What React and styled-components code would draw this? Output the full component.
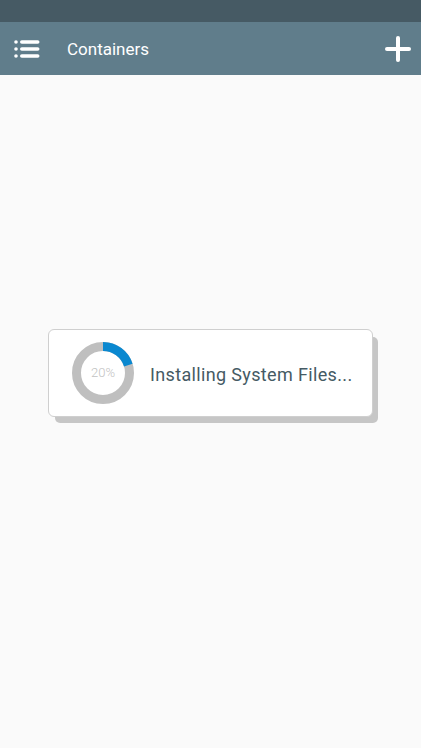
import React from 'react';
import styled, { createGlobalStyle } from 'styled-components';

const GlobalStyle = createGlobalStyle`
  html, body {
    margin: 0;
    padding: 0;
    background: #fafafa;
    font-family: Roboto, "Liberation Sans", sans-serif;
  }
`;

const Screen = styled.div`
  width: 421px;
  height: 748px;
  display: flex;
  flex-direction: column;
  background: #fafafa;
  overflow: hidden;
`;

const StatusBar = styled.div`
  height: 22px;
  background: #465a64;
  flex-shrink: 0;
`;

const Toolbar = styled.div`
  height: 53px;
  background: #607d8b;
  display: flex;
  align-items: center;
  padding: 0 10px 0 14px;
  flex-shrink: 0;
`;

const Title = styled.div`
  flex: 1;
  margin-left: 27px;
  color: #fff;
  font-size: 17px;
  padding-top: 1px;
`;

const IconButton = styled.div`
  display: flex;
  align-items: center;
  justify-content: center;
`;

const Body = styled.div`
  flex: 1;
  display: flex;
  align-items: center;
  justify-content: center;
  padding-bottom: 78px;
`;

const Dialog = styled.div`
  box-sizing: border-box;
  width: 325px;
  height: 88px;
  background: #fff;
  border: 1px solid #cfcfcf;
  border-radius: 6px;
  box-shadow: 6px 7px 0 -1px #c6c6c6;
  display: flex;
  align-items: center;
  padding: 0 0 0 23px;
`;

const Ring = styled.div`
  position: relative;
  width: 62px;
  height: 62px;
  flex-shrink: 0;
`;

const RingLabel = styled.div`
  position: absolute;
  inset: 0;
  display: flex;
  align-items: center;
  justify-content: center;
  color: #c2c2c2;
  font-size: 13px;
  font-weight: 300;
`;

const Message = styled.div`
  margin-left: 16px;
  padding-top: 4px;
  color: #455a64;
  font-size: 18px;
  letter-spacing: 0.35px;
`;

const MenuIcon = () => (
  <svg width="26" height="20" viewBox="0 0 26 20">
    <g fill="#fff">
      <circle cx="2" cy="3" r="1.8" />
      <circle cx="2" cy="10" r="1.8" />
      <circle cx="2" cy="17" r="1.8" />
      <rect x="6" y="1.2" width="19.5" height="3.6" rx="1.8" />
      <rect x="6" y="8.2" width="19.5" height="3.6" rx="1.8" />
      <rect x="6" y="15.2" width="19.5" height="3.6" rx="1.8" />
    </g>
  </svg>
);

const PlusIcon = () => (
  <svg width="26" height="26" viewBox="0 0 26 26">
    <g stroke="#fff" strokeWidth="4" strokeLinecap="round">
      <line x1="13" y1="2" x2="13" y2="24" />
      <line x1="2" y1="13" x2="24" y2="13" />
    </g>
  </svg>
);

const Progress = ({ value }) => {
  const r = 26.5;
  const c = 2 * Math.PI * r;
  return (
    <Ring>
      <svg width="62" height="62" viewBox="0 0 62 62">
        <circle cx="31" cy="31" r={r} fill="none" stroke="#bfbfbf" strokeWidth="9" />
        <circle
          cx="31"
          cy="31"
          r={r}
          fill="none"
          stroke="#0a88d0"
          strokeWidth="9"
          strokeDasharray={`${(c * value) / 100} ${c}`}
          transform="rotate(-90 31 31)"
        />
      </svg>
      <RingLabel>{value}%</RingLabel>
    </Ring>
  );
};

export default function App() {
  return (
    <>
      <GlobalStyle />
      <Screen>
        <StatusBar />
        <Toolbar>
          <IconButton>
            <MenuIcon />
          </IconButton>
          <Title>Containers</Title>
          <IconButton>
            <PlusIcon />
          </IconButton>
        </Toolbar>
        <Body>
          <Dialog>
            <Progress value={20} />
            <Message>Installing System Files...</Message>
          </Dialog>
        </Body>
      </Screen>
    </>
  );
}
